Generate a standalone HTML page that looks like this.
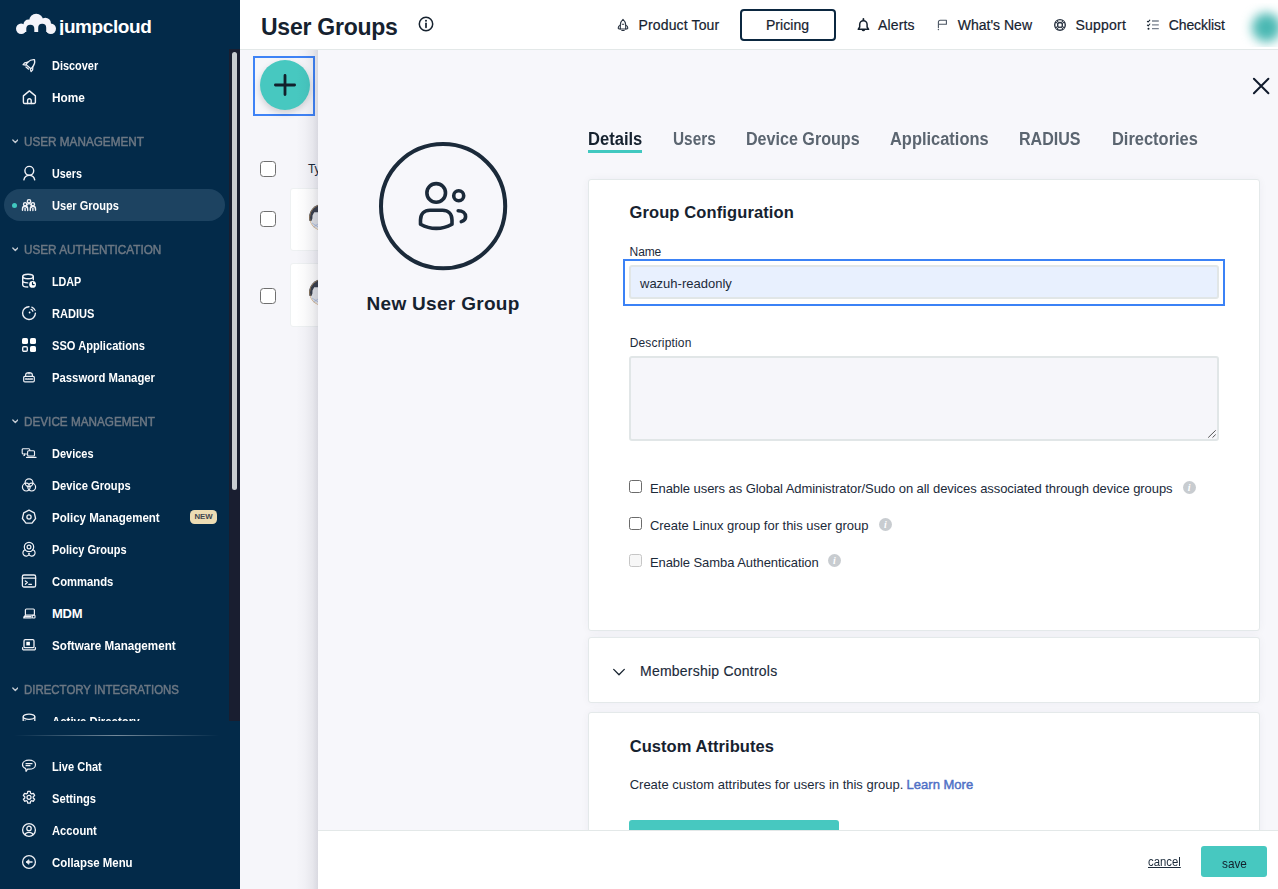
<!DOCTYPE html>
<html lang="en">
<head>
<meta charset="utf-8">
<title>User Groups - JumpCloud</title>
<style>
*{box-sizing:border-box;margin:0;padding:0}
html,body{width:1278px;height:889px;overflow:hidden;background:#f6f6fa;font-family:"Liberation Sans",sans-serif;color:#1b2a3a}
.abs{position:absolute}
/* ---------- sidebar ---------- */
#side{position:absolute;left:0;top:0;width:240px;height:889px;background:#032a49;overflow:hidden}
#navclip{position:absolute;left:0;top:0;width:229px;height:720.500px;overflow:hidden}
#side .track{position:absolute;left:229.200px;top:49px;width:10.800px;height:671.600px;background:#191e30}
#side .thumb{position:absolute;left:232px;top:52px;width:5px;height:438px;background:#c8ccd0;border-radius:2.500px}
#side .divider{position:absolute;left:14px;top:735px;width:205px;height:1px;background:linear-gradient(to right,rgba(255,255,255,0),rgba(255,255,255,.45) 50%,rgba(255,255,255,0))}
.nav{position:absolute;left:0;width:229px;height:32px}
.nav .t{position:absolute;left:52px;top:1px;line-height:32px;font-size:13px;font-weight:700;color:#fff;white-space:nowrap}
.nav svg{position:absolute;left:21px;top:8px;width:16px;height:16px;stroke:#f0f1f6;fill:none;stroke-width:1.4;stroke-linecap:round;stroke-linejoin:round;overflow:visible}
.sec{position:absolute;left:0;width:229px;height:32px}
.sec .t{position:absolute;left:24px;top:1px;line-height:32px;font-size:13px;font-weight:400;color:#6c7783;-webkit-text-stroke:.5px #6c7783;white-space:nowrap}
.sec svg{position:absolute;left:11.800px;top:13.800px;width:6.600px;height:5px;stroke:#c5ccd4;fill:none;stroke-width:1.6;stroke-linecap:round;stroke-linejoin:round}
.nav.active .pill{position:absolute;left:4px;top:0;width:221px;height:32px;border-radius:16px;background:#1d4361}
.nav.active .dot{position:absolute;left:11.900px;top:13.900px;width:5px;height:5px;border-radius:50%;background:#41c8c0}
.new{position:absolute;left:190px;top:9px;width:27px;height:14px;border-radius:4.500px;background:#ecdcb4;color:#3f4650;font-size:7.800px;font-weight:700;line-height:14.500px;text-align:center;letter-spacing:0}
#logo{position:absolute;left:0;top:0;width:229px;height:35px;overflow:hidden}
#logo .w{position:absolute;left:59px;top:16.400px;font-size:19px;line-height:22px;font-weight:700;color:#fff;letter-spacing:-0.4px;white-space:nowrap}
/* ---------- header ---------- */
#head{position:absolute;left:240px;top:0;width:1038px;height:50px;background:#fff;border-bottom:1px solid #e3e8e8}
#head h1{position:absolute;left:20px;top:10px;font-size:22px;line-height:32px;font-weight:700;color:#16222f;white-space:nowrap}
.hitem{position:absolute;color:#16222f;white-space:nowrap;-webkit-text-stroke:.2px #16222f}
.hitem svg,.hicon{position:absolute;stroke:#16222f;fill:none;stroke-linecap:round;stroke-linejoin:round}
#pricing{position:absolute;left:500px;top:9.300px;width:96px;height:31.500px;border:2px solid #0b2740;border-radius:4px;text-align:center;line-height:27px;font-size:15px;color:#16222f}
#avatar{position:absolute;left:12.100px;top:10.200px;width:29px;height:29px;border-radius:50%;background:#4ab8b3;filter:blur(5.500px)}
/* ---------- main (behind panel) ---------- */
#main{position:absolute;left:240px;top:50px;width:1038px;height:839px;background:#f6f6fa}
.cb{position:absolute;width:16px;height:16px;border:1.300px solid #6f6f6f;border-radius:3.500px;background:#fff}
.row{position:absolute;left:50px;width:700px;background:#fff;border-radius:3px;border:1px solid #eef1f2}
.face{position:absolute;left:17.900px;width:27px;height:27px}
/* ---------- panel ---------- */
#pshadow{position:absolute;left:296px;top:50px;width:22px;height:839px;background:linear-gradient(to right,rgba(20,20,50,0),rgba(20,20,50,.025) 40%,rgba(20,20,50,.065) 75%,rgba(20,20,50,.13))}
#panel{position:absolute;left:318px;top:50px;width:960px;height:839px;background:#f7f7fb;overflow:hidden}
.card{position:absolute;left:270px;width:672px;background:#fff;border:1px solid #e4e9ea;border-radius:3px;box-shadow:0 0 8px rgba(20,20,60,.045)}
.tab{position:absolute;top:75px;height:28px;line-height:28px;font-size:18px;font-weight:700;color:#5b6570;white-space:nowrap}
.tab.on{color:#16222f}
.h2{position:absolute;font-size:17px;font-weight:700;color:#16222f;line-height:24px;white-space:nowrap}
.lbl{position:absolute;font-size:12px;color:#1b2a3a;line-height:16px;white-space:nowrap}
.txt{position:absolute;font-size:13px;color:#1b2a3a;line-height:18px;white-space:nowrap}
.scb{position:absolute;width:13px;height:13px;border:1.200px solid #6b6b6b;border-radius:2.500px;background:#fff}
.scb.dis{border-color:#c6c6c6;background:#f7f7f7}
.info{position:absolute;width:13.200px;height:13.200px;border-radius:50%;background:#c8ccd0;color:#fff;font:italic bold 10px/13.200px "Liberation Serif",serif;text-align:center}
#foot{position:absolute;left:0;top:780px;width:960px;height:59px;background:#fff;border-top:1px solid #e3e8e8}
</style>
</head>
<body>
<div id="side">
 <div id="navclip">
  <div class="nav" style="top:49px"><svg viewBox="0 0 16 16"><g transform="translate(1.100 -.3) rotate(41 8 8)" stroke-width="1.250"><path d="M8 1.300c2.300 1.700 3.300 4 3.300 6.200v3.100H4.700V7.500C4.700 5.300 5.700 3 8 1.300z"/><path d="M4.700 7.600L2.700 10.200v2.400l2-1.200M11.300 7.600l2 2.600v2.400l-2-1.200"/><path d="M6.400 12.400h3.200"/></g></svg><span class="t" style="transform:scaleX(0.8412);transform-origin:0 50%;">Discover</span></div>
  <div class="nav" style="top:81px"><svg viewBox="0 0 16 16"><path d="M2.400 6.900L8.400 1.900l6 5v6.300a1.300 1.300 0 0 1-1.300 1.300H3.700a1.300 1.300 0 0 1-1.300-1.300z"/><path d="M6.600 14.500v-3a1.800 1.800 0 0 1 3.600 0v3"/></svg><span class="t" style="transform:scaleX(0.9107);transform-origin:0 50%;">Home</span></div>
  <div class="sec" style="top:125px"><svg viewBox="0 0 8 6"><path d="M1 1.200l3 3 3-3"/></svg><span class="t" style="transform:scaleX(0.9021);transform-origin:0 50%;">USER MANAGEMENT</span></div>
  <div class="nav" style="top:157px"><svg viewBox="0 0 16 16"><circle cx="8.300" cy="5.800" r="4.400"/><path d="M2.900 14.800a5.500 5.500 0 0 1 10.800 0"/></svg><span class="t" style="transform:scaleX(0.8273);transform-origin:0 50%;">Users</span></div>
  <div class="nav active" style="top:189px"><span class="pill"></span><span class="dot"></span><svg viewBox="0 0 16 16"><circle cx="8" cy="4.300" r="1.700"/><path d="M5.600 10.200V9a2.400 2.400 0 0 1 4.800 0v1.200"/><circle cx="4.100" cy="7.200" r="1.600"/><path d="M1.500 13.200v-1.300a2.600 2.600 0 0 1 5.200 0v1.700M4.100 11.300v2.300"/><circle cx="11.900" cy="7.200" r="1.600"/><path d="M14.500 13.200v-1.300a2.600 2.600 0 0 0-5.200 0v1.700M11.900 11.300v2.300"/></svg><span class="t" style="transform:scaleX(0.8508);transform-origin:0 50%;">User Groups</span></div>
  <div class="sec" style="top:233px"><svg viewBox="0 0 8 6"><path d="M1 1.200l3 3 3-3"/></svg><span class="t" style="transform:scaleX(0.9023);transform-origin:0 50%;">USER AUTHENTICATION</span></div>
  <div class="nav" style="top:265px"><svg viewBox="0 0 16 16"><ellipse cx="7" cy="3.500" rx="5.300" ry="2.300"/><path d="M1.700 3.500v8.200c0 1.300 2.200 2.300 5 2.300M12.300 3.500v3.200M1.700 7.600c0 1.300 2.200 2.300 5 2.300"/><circle cx="11.600" cy="11.400" r="3.400" fill="#fff" stroke="none"/><path d="M11.500 9.600v2h1.600" stroke="#032a49" stroke-width="1.200"/></svg><span class="t" style="transform:scaleX(0.8279);transform-origin:0 50%;">LDAP</span></div>
  <div class="nav" style="top:297px"><svg viewBox="0 0 16 16"><path d="M8 1.700A6.400 6.400 0 1 0 14.400 8.300"/><circle cx="8.600" cy="7.500" r="0.900" fill="#fff" stroke="none"/><path d="M10 4.400a3.200 3.200 0 0 1 1.900 1.900M10.800 2.100a5.600 5.600 0 0 1 3.300 3.300" stroke-width="1.200"/></svg><span class="t" style="transform:scaleX(0.8527);transform-origin:0 50%;">RADIUS</span></div>
  <div class="nav" style="top:329px"><svg viewBox="0 0 16 16"><rect x="1" y="1" width="6" height="6" rx="1.600" fill="#fff" stroke="none"/><rect x="9" y="1" width="6" height="6" rx="1.600" fill="#fff" stroke="none"/><rect x="9" y="9" width="6" height="6" rx="1.600" fill="#fff" stroke="none"/><rect x="1.700" y="9.700" width="4.600" height="4.600" rx="1.100"/></svg><span class="t" style="transform:scaleX(0.8555);transform-origin:0 50%;">SSO Applications</span></div>
  <div class="nav" style="top:361px"><svg viewBox="0 0 16 16"><rect x="2.700" y="7.300" width="10.600" height="5.600" rx="1.200" stroke-width="1.200"/><path d="M4.600 7.300V6.200a3.400 2.600 0 0 1 6.800 0v1.100" stroke-width="1.200"/><path d="M4.600 10.100h1.300M7 10.100h1.300M9.400 10.100h2" stroke-width="1.500"/><path d="M7 4.800h2" stroke-width="1.100"/></svg><span class="t" style="transform:scaleX(0.8692);transform-origin:0 50%;">Password Manager</span></div>
  <div class="sec" style="top:405px"><svg viewBox="0 0 8 6"><path d="M1 1.200l3 3 3-3"/></svg><span class="t" style="transform:scaleX(0.9023);transform-origin:0 50%;">DEVICE MANAGEMENT</span></div>
  <div class="nav" style="top:437px"><svg viewBox="0 0 16 16"><path d="M5.600 9H2.200a1 1 0 0 1-1-1V4.700a1 1 0 0 1 1-1h5.600a1 1 0 0 1 1 1v.7" stroke-width="1.100"/><path d="M3.600 9v1.300M2.700 10.600l.9-.3" stroke-width="1"/><rect x="6.600" y="5.700" width="6.900" height="5.300" rx="1" stroke-width="1.100"/><path d="M5.600 12.400h9.400" stroke-width="1.200"/></svg><span class="t" style="transform:scaleX(0.8442);transform-origin:0 50%;">Devices</span></div>
  <div class="nav" style="top:469px"><svg viewBox="0 0 16 16"><circle cx="8" cy="5.700" r="3.900" stroke-width="1.200"/><circle cx="5.300" cy="10.100" r="3.900" stroke-width="1.200"/><circle cx="10.700" cy="10.100" r="3.900" stroke-width="1.200"/></svg><span class="t" style="transform:scaleX(0.8576);transform-origin:0 50%;">Device Groups</span></div>
  <div class="nav" style="top:501px"><svg viewBox="0 0 16 16"><path d="M8 1.200L13.300 3.800 14.600 9.500 11 14.100H5L1.400 9.500 2.700 3.800z" stroke-width="1.300"/><circle cx="8" cy="8" r="2.100" stroke-width="1.300"/></svg><span class="t" style="transform:scaleX(0.8873);transform-origin:0 50%;">Policy Management</span><span class="new">NEW</span></div>
  <div class="nav" style="top:533px"><svg viewBox="0 0 16 16"><circle cx="8" cy="6" r="4.700" stroke-width="1.200"/><circle cx="8" cy="6" r="1.900" stroke-width="1.200"/><path d="M4.100 8.700a3.300 3.300 0 1 0 4.300 3.900M11.900 8.700a3.300 3.300 0 1 1-4.300 3.900" stroke-width="1.200"/></svg><span class="t" style="transform:scaleX(0.8464);transform-origin:0 50%;">Policy Groups</span></div>
  <div class="nav" style="top:565px"><svg viewBox="0 0 16 16"><rect x="1.400" y="2" width="13.200" height="12" rx="1.600" stroke-width="1.300"/><path d="M1.400 5.200h13.200" stroke-width="1.300"/><path d="M4.300 8l2 1.600-2 1.600M7.800 11.300h2.700" stroke-width="1.300"/></svg><span class="t" style="transform:scaleX(0.8673);transform-origin:0 50%;">Commands</span></div>
  <div class="nav" style="top:597px"><svg viewBox="0 0 16 16"><rect x="4.400" y="4" width="9" height="6.200" rx="1" stroke-width="1.200"/><path d="M4.400 10.200L3 12.300M2.600 12.800h7.800M3 11.500h7" stroke-width="1.200"/><rect x="11.300" y="10.300" width="2.700" height="2.700" rx="0.600" stroke-width="1.100"/></svg><span class="t" style="letter-spacing:-0.273px;">MDM</span></div>
  <div class="nav" style="top:629px"><svg viewBox="0 0 16 16"><rect x="3" y="2.700" width="10" height="8" rx="1.200" stroke-width="1.300"/><path d="M1.600 10.700v1a1.200 1.200 0 0 0 1.200 1.200h10.400a1.200 1.200 0 0 0 1.200-1.200v-1" stroke-width="1.300"/><rect x="5.300" y="4.800" width="3.600" height="3.600" fill="#fff" stroke="none"/></svg><span class="t" style="transform:scaleX(0.8965);transform-origin:0 50%;">Software Management</span></div>
  <div class="sec" style="top:673px"><svg viewBox="0 0 8 6"><path d="M1 1.200l3 3 3-3"/></svg><span class="t" style="transform:scaleX(0.8806);transform-origin:0 50%;">DIRECTORY INTEGRATIONS</span></div>
  <div class="nav" style="top:705px"><svg viewBox="0 0 16 16"><ellipse cx="8" cy="3.800" rx="5.800" ry="2.600" stroke-width="1.300"/><path d="M2.200 3.800v6M13.800 3.800v6" stroke-width="1.300"/><path d="M4 8l3 2" stroke-width="1.300"/></svg><span class="t" style="transform:scaleX(0.8775);transform-origin:0 50%;">Active Directory</span></div>
 </div>
 <div id="logo">
  <svg class="abs" style="left:14px;top:11px" width="46" height="26" viewBox="14 11 46 26">
   <g fill="#f4f4fa">
    <circle cx="21.200" cy="28.800" r="5.200"/><circle cx="50.800" cy="28.800" r="5.200"/>
    <circle cx="36.200" cy="20.800" r="7"/>
    <circle cx="28.500" cy="24.500" r="5"/><circle cx="45.300" cy="23.300" r="5.600"/>
    <rect x="24" y="24" width="25" height="8"/>
   </g>
   <g fill="#032a49">
    <path d="M26.300 35v-6.300a4 4 0 0 1 8 0V35z"/>
    <path d="M38.200 35v-7.300a4 4 0 0 1 8 0V35z"/>
   </g>
  </svg>
  <span class="w">jumpcloud</span>
 </div>
 <div class="track"></div><div class="thumb"></div>
 <div class="divider"></div>
  <div class="nav" style="top:750px"><svg viewBox="0 0 16 16"><path d="M8 2.200c3.700 0 6.500 1.900 6.500 4.500S11.700 11.200 8 11.200c-.5 0-1 0-1.400-.1L5 13.300l-.3-2.700C2.800 9.800 1.500 8.400 1.500 6.700 1.500 4.100 4.300 2.200 8 2.200z" stroke-width="1.200"/><path d="M5 5.700h6M5 7.700h4" stroke-width="1.200"/></svg><span class="t" style="transform:scaleX(0.8493);transform-origin:0 50%;">Live Chat</span></div>
  <div class="nav" style="top:782px"><svg viewBox="0 0 16 16"><path d="M6.800 1.400h2.400l.4 1.900 1 .6 1.800-.6 1.200 2.100-1.400 1.300v1.200l1.400 1.300-1.200 2.100-1.800-.6-1 .6-.4 1.900H6.800l-.4-1.900-1-.6-1.800.6-1.200-2.100 1.400-1.300V6.700L2.400 5.400l1.200-2.100 1.800.6 1-.6z" stroke-width="1.300"/><circle cx="8" cy="7.300" r="2" stroke-width="1.300"/></svg><span class="t" style="transform:scaleX(0.8578);transform-origin:0 50%;">Settings</span></div>
  <div class="nav" style="top:814px"><svg viewBox="0 0 16 16"><circle cx="8" cy="8" r="6.400" stroke-width="1.300"/><circle cx="8" cy="6.400" r="2.200" stroke-width="1.300"/><path d="M3.900 12.700a4.300 3.400 0 0 1 8.200 0" stroke-width="1.300"/></svg><span class="t" style="transform:scaleX(0.8615);transform-origin:0 50%;">Account</span></div>
  <div class="nav" style="top:846px"><svg viewBox="0 0 16 16"><circle cx="8" cy="8" r="6.400" stroke-width="1.300"/><path d="M11 8H5.600" stroke-width="1.500"/><path d="M7.600 6L5.300 8l2.300 2z" fill="#fff" stroke-width="1"/></svg><span class="t" style="transform:scaleX(0.8785);transform-origin:0 50%;">Collapse Menu</span></div>
</div>

<div id="main">
 <div class="abs" style="left:13px;top:5.500px;width:62px;height:60.500px;border:2px solid #3f83f6;border-radius:0"></div>
 <div class="abs" style="left:20px;top:10px;width:50px;height:50px;border-radius:50%;background:#47c8c0;box-shadow:0 3px 7px rgba(0,0,0,.17)"></div>
 <svg class="abs" style="left:33px;top:23px" width="24" height="24" viewBox="0 0 24 24"><path d="M12 2.400v19.200M2.400 12h19.200" stroke="#12202c" stroke-width="2.800" stroke-linecap="round"/></svg>
 <div class="cb" style="left:20px;top:111px"></div>
 <div class="txt" style="left:67.900px;top:110.500px;font-size:12px;line-height:16px">Type</div>
 <div class="row" style="top:137.700px;height:63px"><div class="face" style="top:15.200px;border-radius:50%;overflow:hidden"><svg width="27" height="27" viewBox="0 0 27 27" style="display:block"><circle cx="13.500" cy="13.500" r="13" fill="#e2e4e8"/><path d="M0 0h27v8.300H5.200l-1.700 3.200-.1 3-1 2.500H0z" fill="#3a404c"/><path d="M3 19l8 5M9 20l-6 4" stroke="#86a0d2" stroke-width=".500" fill="none"/><circle cx="13.500" cy="13.500" r="13" fill="none" stroke="#d9a866" stroke-width=".600"/></svg></div></div>
 <div class="row" style="top:213.200px;height:64px"><div class="face" style="top:15.200px;border-radius:50%;overflow:hidden"><svg width="27" height="27" viewBox="0 0 27 27" style="display:block"><circle cx="13.500" cy="13.500" r="13" fill="#e2e4e8"/><path d="M0 0h27v8.300H5.200l-1.700 3.200-.1 3-1 2.500H0z" fill="#3a404c"/><path d="M3 19l8 5M9 20l-6 4" stroke="#86a0d2" stroke-width=".500" fill="none"/><circle cx="13.500" cy="13.500" r="13" fill="none" stroke="#d9a866" stroke-width=".600"/></svg></div></div>
 <div class="cb" style="left:20px;top:161.400px"></div>
 <div class="cb" style="left:20px;top:238px"></div>
</div>

<div id="head">
 <!--TITLE-->
 <svg class="hicon" style="left:178px;top:16px" width="16" height="16" viewBox="0 0 16 16"><circle cx="8" cy="8" r="6.700" stroke-width="1.500"/><path d="M8 7.300v4" stroke-width="1.700"/><circle cx="8" cy="4.700" r="1" fill="#16222f" stroke="none"/></svg>
 <!-- header icons (coords in page px via viewBox) -->
 <svg class="abs" style="left:370px;top:12px" width="700" height="26" viewBox="610 12 700 26" fill="none" stroke-linecap="round" stroke-linejoin="round">
  <!-- product tour rocket -->
  <g stroke="#2a3442" stroke-width="1.100">
   <path d="M623 19.300c1.700 1.500 2.700 3.300 2.700 5.500v4.200h-5.400v-4.200c0-2.200 1-4 2.700-5.500z"/>
   <path d="M620.300 25.300c-1.300.5-2.100 1.500-2.100 2.600 0 .8.700 1.200 2.100 1.100M625.700 25.300c1.300.5 2.100 1.500 2.100 2.600 0 .8-.7 1.200-2.100 1.100"/>
   <path d="M622.300 24.300h1.400M621.800 30.500h2.400"/>
  </g>
  <!-- bell -->
  <g stroke="#16222f" stroke-width="1.500">
   <path d="M859.700 27v-2.600a3.700 3.700 0 0 1 7.400 0V27l1.500 2.300h-10.400z"/>
   <path d="M863.400 19v1.200" stroke-width="1.800"/>
   <path d="M862.200 29.800a1.300 1.300 0 0 0 2.400 0" stroke-width="1.300"/>
  </g>
  <!-- flag -->
  <g stroke="#4a5462" stroke-width="1.100">
   <path d="M938.400 27.800v-5.600c0-1.300.7-2 2-2h6v4h-8"/>
   <path d="M938.300 29.600h.2" stroke-width="1.300"/>
  </g>
  <!-- lifebuoy -->
  <g stroke="#2a3442">
   <circle cx="1060" cy="24.900" r="5.300" stroke-width="1.400"/>
   <circle cx="1060" cy="24.900" r="2.400" stroke-width="1.300"/>
   <path d="M1056.200 21.100l2 2M1063.800 21.100l-2 2M1056.200 28.700l2-2M1063.800 28.700l-2-2" stroke-width="2.400" stroke-linecap="butt"/>
   <path d="M1056 20.900l2.200 2.200M1064 20.900l-2.200 2.200M1056 28.900l2.200-2.200M1064 28.900l-2.200-2.200" stroke="#fff" stroke-width=".7" stroke-linecap="butt"/>
  </g>
  <!-- checklist -->
  <g stroke="#7a828f" stroke-width="1.300" stroke-linecap="butt">
   <path d="M1152 21h6.800M1152 24.800h6.800M1152 28.600h6.800"/>
  </g>
  <g stroke="#16222f" stroke-width="1.100">
   <path d="M1147.400 21.300l.8.700 1.600-1.800M1147.400 25.100l.8.700 1.600-1.800"/>
   <circle cx="1148.500" cy="28.700" r="1" fill="#16222f" stroke="none"/>
  </g>
 </svg>
 <div class="hitem" style="left:398.6px;top:15.0px;font-size:14px;line-height:20px;font-weight:400;letter-spacing:0.134px;">Product Tour</div>
 <div class="hitem" style="left:638px;top:15.0px;font-size:14px;line-height:20px;font-weight:400;letter-spacing:0.161px;">Alerts</div>
 <div class="hitem" style="left:717.8px;top:15.0px;font-size:14px;line-height:20px;font-weight:400;letter-spacing:-0.006px;">What's New</div>
 <div class="hitem" style="left:835.5px;top:15.0px;font-size:14px;line-height:20px;font-weight:400;letter-spacing:0.226px;">Support</div>
 <div class="hitem" style="left:928.7px;top:15.0px;font-size:14px;line-height:20px;font-weight:400;letter-spacing:-0.087px;">Checklist</div>
 <div class="hitem" style="left:526px;top:15.0px;font-size:14px;line-height:20px;font-weight:400;letter-spacing:0.034px;">Pricing</div>
 <div class="h2" style="left:21px;top:10.5px;font-size:23px;line-height:32px;font-weight:700;letter-spacing:-0.243px;">User Groups</div>
 <div id="pricing"></div>
 <div class="abs" style="left:1000px;top:3px;width:38px;height:44px;overflow:hidden"><div id="avatar"></div></div>
</div>

<div id="pshadow"></div>
<div id="panel">
 <div class="tab on" style="left:270.3px;top:77.0px;font-size:17.5px;line-height:24px;font-weight:700;transform:scaleX(0.9461);transform-origin:0 50%;">Details</div>
 <div class="tab" style="left:355px;top:77.0px;font-size:17.5px;line-height:24px;font-weight:700;transform:scaleX(0.8776);transform-origin:0 50%;">Users</div>
 <div class="tab" style="left:428.2px;top:77.0px;font-size:17.5px;line-height:24px;font-weight:700;transform:scaleX(0.9196);transform-origin:0 50%;">Device Groups</div>
 <div class="tab" style="left:572.2px;top:77.0px;font-size:17.5px;line-height:24px;font-weight:700;transform:scaleX(0.9389);transform-origin:0 50%;">Applications</div>
 <div class="tab" style="left:701.3px;top:77.0px;font-size:17.5px;line-height:24px;font-weight:700;transform:scaleX(0.9166);transform-origin:0 50%;">RADIUS</div>
 <div class="tab" style="left:793.8px;top:77.0px;font-size:17.5px;line-height:24px;font-weight:700;transform:scaleX(0.9394);transform-origin:0 50%;">Directories</div>
 <div class="abs" style="left:270px;top:99.5px;width:54px;height:3px;background:#41c8c0"></div>
 <div class="h2" style="left:48.5px;top:240.8px;font-size:19px;line-height:26px;font-weight:700;letter-spacing:0.31px;">New User Group</div>
 <!-- close X -->
 <svg class="abs" style="left:933px;top:26px" width="20" height="20" viewBox="0 0 20 20"><path d="M2.900 2.800l14.500 14.500M17.400 2.800l-14.500 14.500" stroke="#111b2d" stroke-width="2" stroke-linecap="round"/></svg>
 <!-- profile circle -->
 <svg class="abs" style="left:59px;top:90.800px" width="132" height="132" viewBox="0 0 132 132" fill="none" stroke="#1b2a3a" stroke-linecap="round" stroke-linejoin="round">
  <circle cx="66.100" cy="65.200" r="62.100" stroke-width="4"/>
  <g stroke-width="3.600">
   <circle cx="59.200" cy="51.900" r="9.300"/>
   <path d="M43.500 79c0-6 4-9.700 9.500-9.700h12.500c5.500 0 9.500 3.700 9.500 9.700v4.200c-5 2.800-10 4.200-15.750 4.200s-10.750-1.400-15.750-4.200z"/>
   <circle cx="81.700" cy="54.700" r="5"/>
   <path d="M81.200 69.700c4.400 0 7.400 2.400 7.400 6 0 2.400-1.400 4-4.300 4.900"/>
  </g>
 </svg>
 <!-- card 1 -->
 <div class="card" style="top:129px;height:451.500px"></div>
 <div class="abs" style="left:305px;top:208.900px;width:601.800px;height:46.800px;border:2px solid #3b82f6;background:#fff"></div>
 <div class="abs" style="left:311.200px;top:215.100px;width:589.700px;height:33.600px;border:2px solid #e1e6e7;border-radius:3px;background:#e8f0fe"></div>
 <div class="abs" style="left:311.300px;top:306.300px;width:589.700px;height:84.700px;border:2px solid #e1e6e7;border-radius:3px;background:#f6f6fa"></div>
 <svg class="abs" style="left:889px;top:379px" width="10" height="10" viewBox="0 0 10 10"><path d="M8.700 1.300L1.200 8.600M8.700 5.500L5.500 8.600" stroke="#555" stroke-width="1"/></svg>
 <div class="scb" style="left:311px;top:430px"></div>
 <div class="scb" style="left:311px;top:467px"></div>
 <div class="scb dis" style="left:311px;top:504px"></div>
 <div class="info" style="left:864.500px;top:430.800px">i</div>
 <div class="info" style="left:560.700px;top:468.200px">i</div>
 <div class="info" style="left:509.900px;top:504.300px">i</div>
 <!-- card 2 -->
 <div class="card" style="top:587.200px;height:66.300px"></div>
 <svg class="abs" style="left:293.500px;top:617px" width="14" height="10" viewBox="0 0 14 10"><path d="M1.700 2.400l5.300 5.400 5.300-5.400" fill="none" stroke="#16222f" stroke-width="1.300" stroke-linecap="round" stroke-linejoin="round"/></svg>
 <!-- card 3 -->
 <div class="card" style="top:662.100px;height:200px"></div>
 <div class="abs" style="left:311px;top:770.400px;width:210px;height:40px;background:#47c8c0;border-radius:3px"></div>
 <div class="h2" style="left:311.5px;top:150.2px;font-size:16.5px;line-height:24px;font-weight:700;letter-spacing:0.115px;">Group Configuration</div>
 <div class="lbl" style="left:311.6px;top:193.5px;font-size:12px;line-height:16px;font-weight:400;letter-spacing:-0.105px;">Name</div>
 <div class="txt" style="left:322px;top:225.0px;font-size:13px;line-height:18px;font-weight:400;letter-spacing:0.001px;">wazuh-readonly</div>
 <div class="lbl" style="left:311.7px;top:284.8px;font-size:12px;line-height:16px;font-weight:400;letter-spacing:0.167px;">Description</div>
 <div class="txt" style="left:331.9px;top:430.0px;font-size:13px;line-height:18px;font-weight:400;letter-spacing:-0.063px;">Enable users as Global Administrator/Sudo on all devices associated through device groups</div>
 <div class="txt" style="left:331.9px;top:467.0px;font-size:13px;line-height:18px;font-weight:400;letter-spacing:-0.013px;">Create Linux group for this user group</div>
 <div class="txt" style="left:331.9px;top:503.9px;font-size:13px;line-height:18px;font-weight:400;letter-spacing:-0.068px;">Enable Samba Authentication</div>
 <div class="txt" style="left:322px;top:611.3px;font-size:14px;line-height:20px;font-weight:400;letter-spacing:0.23px;-webkit-text-stroke:.15px #1b2a3a;">Membership Controls</div>
 <div class="h2" style="left:311.7px;top:684.2px;font-size:16.5px;line-height:24px;font-weight:700;letter-spacing:0.055px;">Custom Attributes</div>
 <div class="txt" style="left:311.7px;top:726.4px;font-size:13px;line-height:18px;font-weight:400;letter-spacing:-0.005px;">Create custom attributes for users in this group.</div>
 <div class="txt" style="left:588.6px;top:726.4px;font-size:13px;line-height:18px;font-weight:400;letter-spacing:0.013px;color:#4f70c6;-webkit-text-stroke:.45px #4f70c6;">Learn More</div>
 <div id="foot">
  <div class="abs" style="left:883px;top:14.900px;width:66px;height:31px;background:#47c8c0;border-radius:3px"></div>
  <div class="txt" style="left:830.2px;top:23.3px;font-size:12px;line-height:16px;font-weight:400;transform:scaleX(0.9456);transform-origin:0 50%;text-decoration:underline;">cancel</div>
  <div class="txt" style="left:903.5px;top:23.5px;font-size:13.5px;line-height:18px;font-weight:400;transform:scaleX(0.8727);transform-origin:0 50%;color:#12202c;">save</div>
 </div>
</div>
</body>
</html>
